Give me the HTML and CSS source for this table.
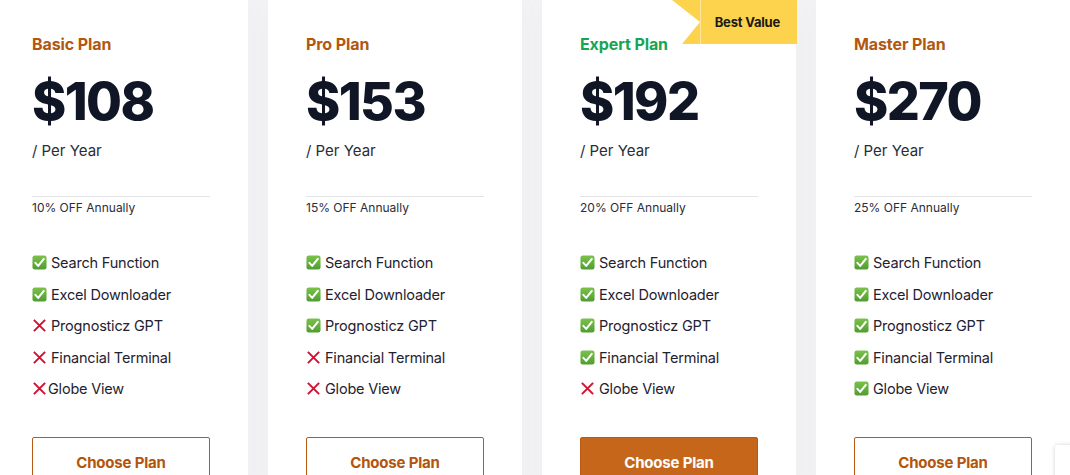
FILE: index.html
```html
<!DOCTYPE html>
<html lang="en">
<head>
<meta charset="utf-8">
<title>Pricing</title>
<link rel="stylesheet" href="styles.css">
</head>
<body>
<svg width="0" height="0" class="defs" aria-hidden="true">
  <defs>
    <linearGradient id="g" x1="0" y1="0" x2="0" y2="1">
      <stop offset="0" stop-color="#7cc24b"/>
      <stop offset="1" stop-color="#4f9d2f"/>
    </linearGradient>
    <symbol id="ok" viewBox="0 0 16 16">
      <rect x="0.5" y="0.5" width="15" height="15" rx="2.5" fill="url(#g)"/>
      <path d="M3.6 8.4 L6.6 11.6 L12.6 4.2" fill="none" stroke="#fff" stroke-width="2.2" stroke-linecap="round" stroke-linejoin="round"/>
    </symbol>
    <symbol id="no" viewBox="0 0 16 16">
      <path d="M2 2 L14 14 M14 2 L2 14" fill="none" stroke="#cf1232" stroke-width="2.1"/>
    </symbol>
  </defs>
</svg>

<main class="plans">
  <section class="card">
    <h2 class="plan-name">Basic Plan</h2>
    <div class="price">$108</div>
    <div class="period">/ Per Year</div>
    <div class="discount">10% OFF Annually</div>
    <ul class="features">
      <li><svg class="ic"><use href="#ok"/></svg>Search Function</li>
      <li><svg class="ic"><use href="#ok"/></svg>Excel Downloader</li>
      <li><svg class="ic"><use href="#no"/></svg>Prognosticz GPT</li>
      <li><svg class="ic"><use href="#no"/></svg>Financial Terminal</li>
      <li><svg class="ic tight"><use href="#no"/></svg>Globe View</li>
    </ul>
    <button class="choose">Choose Plan</button>
  </section>

  <section class="card">
    <h2 class="plan-name">Pro Plan</h2>
    <div class="price">$153</div>
    <div class="period">/ Per Year</div>
    <div class="discount">15% OFF Annually</div>
    <ul class="features">
      <li><svg class="ic"><use href="#ok"/></svg>Search Function</li>
      <li><svg class="ic"><use href="#ok"/></svg>Excel Downloader</li>
      <li><svg class="ic"><use href="#ok"/></svg>Prognosticz GPT</li>
      <li><svg class="ic"><use href="#no"/></svg>Financial Terminal</li>
      <li><svg class="ic"><use href="#no"/></svg>Globe View</li>
    </ul>
    <button class="choose">Choose Plan</button>
  </section>

  <section class="card featured">
    <div class="ribbon"><span>Best Value</span></div>
    <h2 class="plan-name green">Expert Plan</h2>
    <div class="price">$192</div>
    <div class="period">/ Per Year</div>
    <div class="discount">20% OFF Annually</div>
    <ul class="features">
      <li><svg class="ic"><use href="#ok"/></svg>Search Function</li>
      <li><svg class="ic"><use href="#ok"/></svg>Excel Downloader</li>
      <li><svg class="ic"><use href="#ok"/></svg>Prognosticz GPT</li>
      <li><svg class="ic"><use href="#ok"/></svg>Financial Terminal</li>
      <li><svg class="ic"><use href="#no"/></svg>Globe View</li>
    </ul>
    <button class="choose filled">Choose Plan</button>
  </section>

  <section class="card">
    <h2 class="plan-name">Master Plan</h2>
    <div class="price">$270</div>
    <div class="period">/ Per Year</div>
    <div class="discount">25% OFF Annually</div>
    <ul class="features">
      <li><svg class="ic"><use href="#ok"/></svg>Search Function</li>
      <li><svg class="ic"><use href="#ok"/></svg>Excel Downloader</li>
      <li><svg class="ic"><use href="#ok"/></svg>Prognosticz GPT</li>
      <li><svg class="ic"><use href="#ok"/></svg>Financial Terminal</li>
      <li><svg class="ic"><use href="#ok"/></svg>Globe View</li>
    </ul>
    <button class="choose">Choose Plan</button>
  </section>
</main>
<div class="corner-badge"></div>
</body>
</html>
```

FILE: styles.css
```css
html, body {
  margin: 0;
  padding: 0;
  background: #f3f3f5;
  overflow: hidden;
  height: 475px;
  font-family: Inter, "Noto Sans", "Liberation Sans", sans-serif;
  color: #1f2230;
}

.defs {
  position: absolute;
  width: 0;
  height: 0;
}

.plans {
  display: flex;
  gap: 20px;
  margin-left: -6px;
  width: 1076px;
}

.card {
  position: relative;
  flex: 0 0 254px;
  box-sizing: border-box;
  background: #fff;
  padding: 34px 38px 0;
  height: 500px;
  box-shadow: 0 0 30px rgba(30, 35, 60, 0.025);
}

.plan-name {
  margin: 0;
  font-size: 16px;
  line-height: 20px;
  font-weight: 700;
  color: #b3570f;
  letter-spacing: -0.1px;
}

.plan-name.green {
  color: #17a553;
}

.price {
  margin-top: 20px;
  font-size: 52px;
  line-height: 56px;
  font-weight: 800;
  color: #101626;
  letter-spacing: -1.6px;
}

.period {
  margin-top: 11px;
  font-size: 15px;
  line-height: 20px;
  color: #2a2d38;
}

.discount {
  margin-top: 35px;
  border-top: 1px solid #e3e3e6;
  padding-top: 2px;
  font-size: 12px;
  line-height: 18px;
  color: #2a2d38;
}

.features {
  list-style: none;
  margin: 30px 0 0;
  padding: 0;
}

.features li {
  display: flex;
  align-items: center;
  height: 31.5px;
  font-size: 14.5px;
  color: #1f2230;
  letter-spacing: -0.2px;
}

.ic {
  width: 15px;
  height: 15px;
  flex: 0 0 15px;
  margin-right: 4px;
}

.ic.tight {
  margin-right: 1px;
}

.choose {
  display: block;
  width: 100%;
  height: 52px;
  margin-top: 32px;
  box-sizing: border-box;
  background: #fff;
  border: 1.5px solid #b65a14;
  border-radius: 2px;
  font-family: inherit;
  font-size: 15px;
  font-weight: 700;
  color: #b3540d;
  letter-spacing: -0.2px;
  padding: 0;
}

.choose.filled {
  background: #c6661b;
  color: #fff;
  border-color: #b65a14;
}

.ribbon {
  position: absolute;
  top: 0;
  right: -1px;
  width: 125px;
  height: 44px;
  background: #fdd24c;
  clip-path: polygon(0 0, 100% 0, 100% 100%, 10px 100%, 28px 50%);
  display: flex;
  align-items: center;
  justify-content: flex-end;
  box-sizing: border-box;
  padding-right: 17px;
}

.ribbon::before {
  content: "";
  position: absolute;
  left: 28px;
  top: 0;
  bottom: 0;
  width: 1px;
  background: rgba(255, 255, 255, 0.45);
}

.ribbon span {
  font-size: 13px;
  font-weight: 700;
  color: #1c1a14;
  letter-spacing: -0.2px;
}

.corner-badge {
  position: absolute;
  left: 1055px;
  top: 445px;
  width: 40px;
  height: 40px;
  background: #fff;
  border-radius: 3px;
  box-shadow: 0 0 4px rgba(0, 0, 0, 0.18);
}
```
